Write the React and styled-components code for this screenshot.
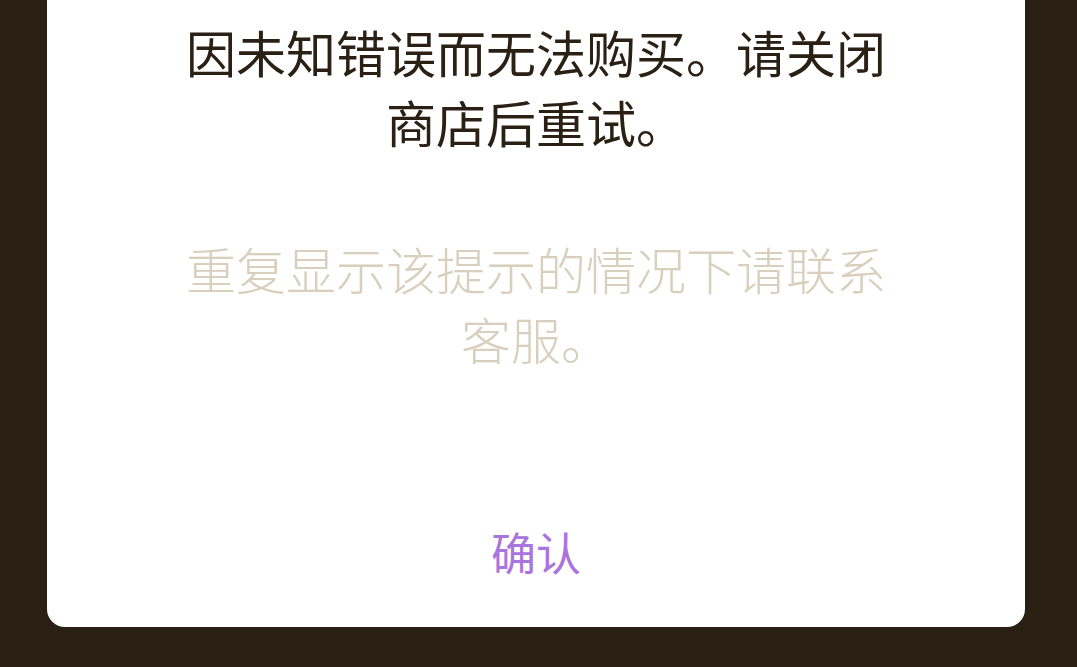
import React from "react";
import styled, { createGlobalStyle } from "styled-components";

const Global = createGlobalStyle`
  html, body {
    margin: 0;
    padding: 0;
    height: 100%;
    background: #291f12;
  }
  #root { height: 100%; }
`;

const Screen = styled.div`
  height: 667px;
  width: 1077px;
  background: #291f12;
  padding: 0 52px 0 47px;
  box-sizing: border-box;
  overflow: hidden;
`;

const Dialog = styled.div`
  height: 627px;
  background: #ffffff;
  border-radius: 0 0 18px 18px;
  display: flex;
  flex-direction: column;
  align-items: center;
  padding-top: 16px;
  box-sizing: border-box;
  font-family: "Noto Sans CJK SC", "Noto Sans", sans-serif;
`;

const Message = styled.p`
  margin: ${(p) => p.$top || 0}px 0 0;
  width: 720px;
  text-align: center;
  font-size: 50px;
  line-height: 70px;
  font-weight: ${(p) => p.$weight || 400};
  color: ${(p) => p.$color};
`;

const Footer = styled.div`
  margin-top: auto;
  padding-bottom: 45px;
  display: flex;
  justify-content: center;
`;

const ConfirmButton = styled.button`
  border: none;
  background: none;
  padding: 0;
  font-family: "Noto Sans CJK SC", "Noto Sans", sans-serif;
  font-size: 45px;
  line-height: 60px;
  color: #a874de;
  cursor: pointer;
`;

export default function App() {
  return (
    <>
      <Global />
      <Screen>
        <Dialog>
          <Message $color="#2a2014" $weight={400}>
            因未知错误而无法购买。请关闭商店后重试。
          </Message>
          <Message $color="#d8cfbc" $weight={300} $top={77}>
            重复显示该提示的情况下请联系客服。
          </Message>
          <Footer>
            <ConfirmButton>确认</ConfirmButton>
          </Footer>
        </Dialog>
      </Screen>
    </>
  );
}
